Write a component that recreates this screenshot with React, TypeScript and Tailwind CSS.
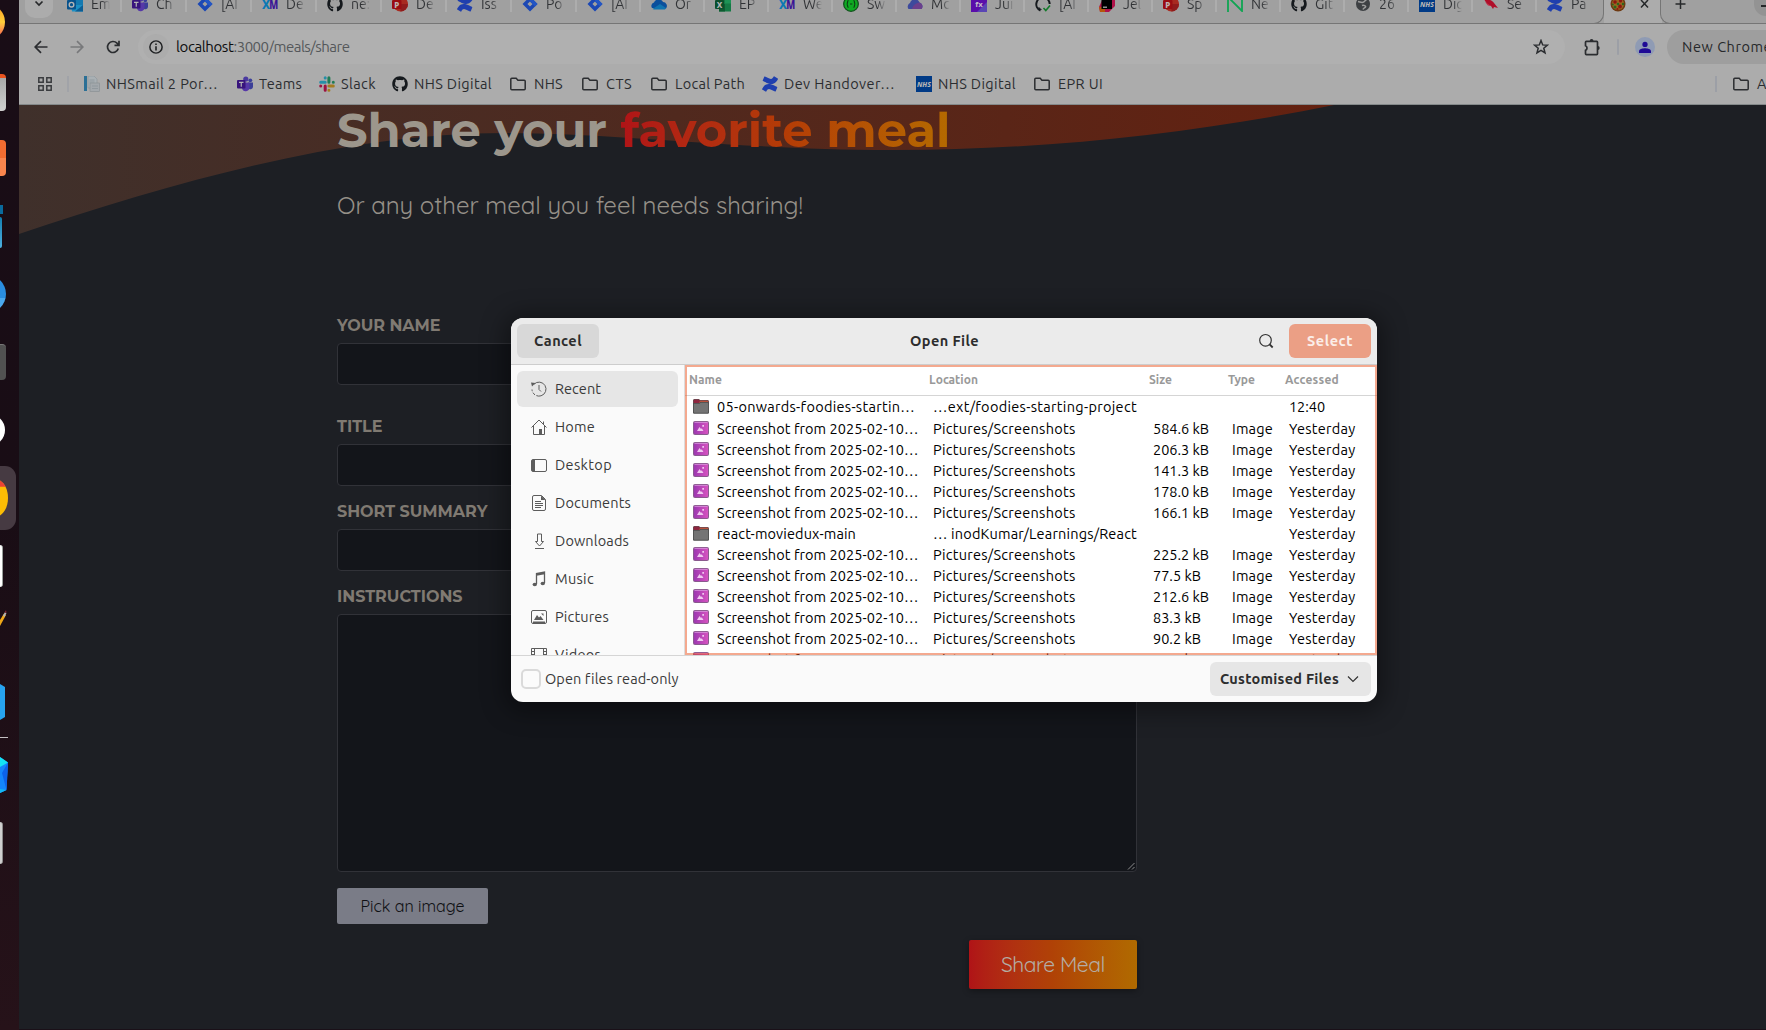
import { useLayoutEffect, useRef, type ReactNode } from "react";
import { FaGithub, FaConfluence } from "react-icons/fa";

const UI = "font-['Ubuntu','Noto_Sans',sans-serif]";
const HEAD = "font-['Montserrat','Inter',sans-serif]";
const BODY = "font-['Quicksand','Lato',sans-serif]";

/* Single line of text whose tracking is adjusted so that it fills `w` pixels. */
function Fit({ w, className = "", children }: { w: number; className?: string; children: string }) {
  const ref = useRef<HTMLSpanElement>(null);
  useLayoutEffect(() => {
    const el = ref.current;
    if (!el) return;
    el.style.letterSpacing = "0px";
    const natural = el.getBoundingClientRect().width;
    el.style.letterSpacing = `${(w - natural) / children.length}px`;
  }, [w, children]);
  return (
    <span ref={ref} className={`inline-block whitespace-pre ${className}`}>
      {children}
    </span>
  );
}

/* ---------- favicons ---------- */

const Svg = ({ children, s = 16, vb = 16, className = "" }: { children: ReactNode; s?: number; vb?: number; className?: string }) => (
  <svg width={s} height={s} viewBox={`0 0 ${vb} ${vb}`} fill="none" className={`shrink-0 ${className}`}>
    {children}
  </svg>
);

const letter = { fontFamily: "Noto Sans, sans-serif", fontWeight: 800, textAnchor: "middle" as const };

const Outlook = () => (
  <Svg>
    <rect x="5" y="0" width="11" height="14" fill="#1479b0" />
    <path d="M4 9h12v6.500H5z" fill="#1a8fc4" />
    <path d="M16 9v6.500H8z" fill="#0c5d94" />
    <rect x="0" y="4" width="9" height="9.500" rx="1" fill="#07528c" />
    <circle cx="4.500" cy="8.700" r="2.300" stroke="#b4b4b4" strokeWidth="1.400" />
  </Svg>
);
const Teams = () => (
  <Svg>
    <circle cx="13.300" cy="4.300" r="1.900" fill="#3a3f9a" />
    <circle cx="8.800" cy="3" r="2.600" fill="#4b3aa0" />
    <path d="M11 6.500h5v4.500a2.700 2.700 0 0 1-5 1z" fill="#3b3f98" />
    <path d="M5 6.500h7.500v5a3.800 3.800 0 0 1-7.500.8z" fill="#5638a8" />
    <rect x="0" y="4" width="8.500" height="8.500" rx="1" fill="#38147d" />
    <path d="M2 6.400h4.500M4.250 6.400v4.300" stroke="#b4b4b4" strokeWidth="1.200" />
  </Svg>
);
const Jira = () => (
  <Svg>
    <path fillRule="evenodd" d="M8 .5 15.500 8 8 15.500.500 8zM8 5.400 5.400 8 8 10.600 10.600 8z" fill="#1c48b4" />
    <path d="M8 .5 15.500 8l-2.500 2.500L8 5.400z" fill="#2456c4" />
  </Svg>
);
const XM = () => (
  <Svg>
    <text x="4" y="12.500" fontSize="12.500" fill="#0a78b4" textLength="8" lengthAdjust="spacingAndGlyphs" {...letter}>X</text>
    <text x="11.800" y="12.500" fontSize="12.500" fill="#3a1496" textLength="9" lengthAdjust="spacingAndGlyphs" {...letter}>M</text>
  </Svg>
);
const Github = () => <FaGithub size={16} color="#15191d" className="shrink-0" />;
const PPt = () => (
  <Svg>
    <circle cx="8.500" cy="8" r="7.500" fill="#a82a20" />
    <path d="M8.500 8H16a7.500 7.500 0 0 1-7.500 7.500z" fill="#8f1c1c" />
    <rect x="0" y="4" width="9.500" height="9" rx="1" fill="#9a0d12" />
    <text x="4.800" y="11.500" fontSize="8" fill="#c0b4b4" {...letter}>P</text>
  </Svg>
);
const Confluence = () => <FaConfluence size={16} color="#1f3fae" className="shrink-0" />;
const OneDrive = () => (
  <Svg>
    <path d="M1 12a3.600 3.600 0 0 1 2-5.500A5 5 0 0 1 12 6a4 4 0 0 1 3 6.500z" fill="#0a4f9c" />
    <path d="M1.500 13 9 8l6 4-1 1.500H3z" fill="#0f74b0" />
  </Svg>
);
const Excel = () => (
  <Svg>
    <rect x="4" y="0" width="12" height="15.500" fill="#157a45" />
    <path d="M10 0h6v7.500h-6z" fill="#1e9356" />
    <path d="M4 8h6v7.500H4z" fill="#0e5a31" />
    <rect x="0" y="4" width="9" height="9" rx="1" fill="#0b4f2c" />
    <text x="4.500" y="11.500" fontSize="8" fill="#b4b4b4" {...letter}>X</text>
  </Svg>
);
const Swagger = () => (
  <Svg>
    <circle cx="8" cy="8" r="7.300" fill="#0eaa22" stroke="#12511d" strokeWidth="1.300" />
    <path d="M5.500 4.500c-1.500 0-.5 3.500-1.800 3.500 1.300 0 .3 3.500 1.800 3.500M10.500 4.500c1.500 0 .5 3.500 1.800 3.500-1.300 0-.3 3.500-1.800 3.500M7 8h2.300" stroke="#0d3d15" strokeWidth="1.200" />
  </Svg>
);
const Cloud = () => (
  <Svg>
    <path d="M1.500 13a4 4 0 0 1 1.500-6A5 5 0 0 1 12.500 6.500 4 4 0 0 1 14.500 13z" fill="#3d4a9c" />
    <path d="M5 13c1-4 4-6 7.500-6.500A4 4 0 0 1 14.500 13z" fill="#6a3f8c" />
  </Svg>
);
const Fx = () => (
  <Svg>
    <rect width="16" height="16" fill="#5a0eaa" />
    <path d="M16 6v10H6z" fill="#5a45b4" />
    <text x="8" y="11" fontSize="7.500" fill="#c0b4c8" {...letter}>fx</text>
  </Svg>
);
const GithubCheck = () => (
  <Svg>
    <path d="M5.500 14.500A6.700 6.700 0 1 1 14.700 8" stroke="#15191d" strokeWidth="2" />
    <path d="M3.500 11.500c1.500.5 1 2 3 2" stroke="#15191d" strokeWidth="1.200" />
    <path d="m8.500 12 2.300 2.500L15 9.500" stroke="#137a2a" strokeWidth="1.600" />
  </Svg>
);
const JetBrains = () => (
  <Svg>
    <path d="M5 0h7l4 4v6l-6 6H1l-1-5z" fill="#b0124a" />
    <path d="M0 11h6v5H1z" fill="#b4560c" />
    <rect x="2.500" y="2.500" width="10.500" height="10.500" fill="#000" />
    <path d="M4 11.200h4" stroke="#b4b4b4" strokeWidth="1.200" />
  </Svg>
);
const NLogo = () => (
  <Svg>
    <path d="M1 16V1l14 14V0" stroke="#0fa552" strokeWidth="1.800" />
  </Svg>
);
const Globe = () => (
  <Svg>
    <circle cx="8" cy="8" r="7" fill="#3d4043" />
    <path d="M3 5.500c2 .3 3 1.200 5 .8s1.500-2 3.500-2.300M7 9.500c2-.8 4 .5 3.500 1.500S8.500 12 8 13.500" stroke="#9c9c9c" strokeWidth="1.500" />
  </Svg>
);
const Nhs = () => (
  <Svg>
    <rect width="16" height="16" fill="#003a86" />
    <text x="8" y="11" fontSize="7.500" fontStyle="italic" fill="#b4b4b4" textLength="14" lengthAdjust="spacingAndGlyphs" {...letter}>NHS</text>
  </Svg>
);
const Bird = () => (
  <Svg>
    <path d="M1 3c4 0 8 1 10 4l4 5-4-1-1 2-2-3C5 9 3 7 1 3z" fill="#b00f2a" />
    <path d="m2 6 6 4-3-.5z" fill="#c4304a" />
  </Svg>
);
const Pizza = () => (
  <Svg>
    <circle cx="8" cy="8" r="7.500" fill="#6e3a12" />
    <circle cx="8" cy="8" r="6" fill="#9a6420" />
    <circle cx="5" cy="6" r="1.800" fill="#8c1610" />
    <circle cx="10.500" cy="5" r="1.600" fill="#8c1610" />
    <circle cx="10" cy="10.500" r="1.900" fill="#8c1610" />
    <circle cx="5" cy="11" r="1.500" fill="#2c661c" />
    <circle cx="8" cy="8" r="1.300" fill="#2c661c" />
    <circle cx="13" cy="8" r="1.200" fill="#2c661c" />
    <circle cx="7.500" cy="13" r="1.100" fill="#8c1610" />
    <circle cx="2.800" cy="8.500" r="1" fill="#2c661c" />
  </Svg>
);
const SlackLogo = () => (
  <Svg>
    <g strokeWidth="3" strokeLinecap="round">
      <path d="M6.200 1.700v.3M1.700 6.200h4.500" stroke="#258fa8" />
      <path d="M9.900 1.700v4.500M14.300 6.200h.01" stroke="#1f7c55" />
      <path d="M9.900 9.900h4.400M9.900 14.200h.01" stroke="#a57c20" />
      <path d="M6.200 9.900v4.400M1.700 9.900h.01" stroke="#9c1240" />
    </g>
  </Svg>
);
const Doc = () => (
  <Svg>
    <rect x="0" y="0" width="3" height="15" fill="#2c7096" />
    <path d="M4 0h6l3 3v9H4z" fill="#a9b0b4" stroke="#8b9499" strokeWidth=".6" />
    <rect x="6" y="7" width="9.500" height="8.500" fill="#a3a8ac" stroke="#858c90" strokeWidth=".6" />
    <path d="M5.500 4h5M5.500 6h5M8 10h6M8 12.500h6" stroke="#8b9499" strokeWidth=".8" />
  </Svg>
);
const Folder = () => (
  <Svg>
    <path d="M.8 3.300c0-.6.400-1 1-1h4.400l1.700 1.900h6.300c.6 0 1 .4 1 1v7.500c0 .6-.4 1-1 1H1.800c-.6 0-1-.4-1-1z" stroke="#2b2d30" strokeWidth="1.500" />
  </Svg>
);

/* ---------- browser chrome ---------- */

const tabs: [() => ReactNode, string][] = [
  [Outlook, "Em"], [Teams, "Ch"], [Jira, "[AI"], [XM, "De"], [Github, "ne:"], [PPt, "De"], [Confluence, "Iss"], [Jira, "Po"],
  [Jira, "[AI"], [OneDrive, "Or"], [Excel, "EP"], [XM, "We"], [Swagger, "Sw"], [Cloud, "Mc"], [Fx, "Jui"], [GithubCheck, "[AI"],
  [JetBrains, "Jel"], [PPt, "Sp"], [NLogo, "Ne"], [Github, "Git"], [Globe, "26"], [Nhs, "Dig"], [Bird, "Se"], [Confluence, "Pa"],
];

function TabStrip() {
  return (
    <div className="relative flex h-[24px] shrink-0 overflow-hidden border-b border-[#757575] bg-[#a0a0a0]">
      <div className="ml-[6px] flex h-[18px] w-[28px] shrink-0 items-start justify-center rounded-b-[10px] bg-[#acacac]">
        <svg width="10" height="8" viewBox="0 0 10 8" fill="none"><path d="m1.500 1.500 3.500 3.500 3.500-3.500" stroke="#26282a" strokeWidth="1.700" /></svg>
      </div>
      <div className="ml-[4px] flex shrink-0">
        {tabs.map(([Icon, t], i) => (
          <div key={i} className={`flex h-[12px] shrink-0 items-center ${i < 8 ? "w-[65px]" : "w-[64px]"} ${i < 23 ? "border-r-2 border-[#adadad]" : ""}`}>
            <div className="-mt-[4px] ml-[10px] flex w-[24px] shrink-0"><Icon /></div>
            <span className="-mt-[5px] w-[19px] overflow-hidden bg-gradient-to-r from-[#303235] from-55% to-[#a0a0a0] bg-clip-text text-[14px] leading-[20px] whitespace-nowrap text-transparent">{t}</span>
          </div>
        ))}
      </div>
      <div className="absolute top-0 left-[1585px] flex h-[24px] w-[58px] items-start bg-[#acacac]">
        <div className="-ml-[10px] h-[24px] w-[10px] shrink-0 rounded-br-[10px] border-r border-b border-[#757575] bg-[#a0a0a0]" />
        <div className="-mt-[4px] ml-[6px]"><Pizza /></div>
        <svg className="ml-[14px]" width="9" height="9" viewBox="0 0 9 9"><path d="m1 0 7 7.500M8 0 1 7.500" stroke="#26282a" strokeWidth="1.500" /></svg>
      </div>
      <div className="absolute top-0 left-[1641px] flex h-[24px] w-[106px] items-start rounded-bl-[10px] border-b border-l border-[#757575] bg-[#a0a0a0]">
        <svg className="mt-[-1px] ml-[14px] shrink-0" width="11" height="11" viewBox="0 0 11 11"><path d="M5.500 0v10M.5 5h10" stroke="#26282a" strokeWidth="1.500" /></svg>
        <div className="ml-[68px] flex h-[16px] w-[24px] shrink-0 items-start rounded-b-full bg-[#939393]"><span className="mt-[5px] ml-[7px] h-[2px] w-[9px] bg-[#26282a]" /></div>
      </div>
    </div>
  );
}

function Toolbar() {
  return (
    <div className="flex h-[46px] shrink-0 items-center">
      <div className="flex w-[119px] shrink-0 items-center pl-[15px]">
        <svg width="14" height="14" viewBox="0 0 14 14" fill="none"><path d="M13.500 7H1.500M7 1.200 1.200 7 7 12.800" stroke="#2b2d30" strokeWidth="1.700" /></svg>
        <svg className="ml-[22px]" width="14" height="14" viewBox="0 0 14 14" fill="none"><path d="M.5 7h12M7 1.200 12.800 7 7 12.800" stroke="#78797b" strokeWidth="1.700" /></svg>
        <svg className="ml-[22px]" width="14" height="14" viewBox="0 0 14 14" fill="none"><path d="M12.300 8.500A5.500 5.500 0 1 1 11 3.200l1.700 1.700M13 .8v4.500H8.500" stroke="#2b2d30" strokeWidth="1.700" /></svg>
      </div>
      <div className="flex h-[34px] w-[1427px] shrink-0 items-center rounded-full bg-[#b0b0b0]">
        <div className="ml-[5px] flex size-[26px] items-center justify-center rounded-full bg-[#acacac]">
          <Svg s={14}><circle cx="8" cy="8" r="7" stroke="#1f2123" strokeWidth="1.700" /><path d="M8 7v5M8 4v1.700" stroke="#1f2123" strokeWidth="1.800" /></Svg>
        </div>
        <div className="ml-[7px] flex text-[15px] leading-5">
          <Fit w={57.5} className="text-[#0c0d0e]">localhost</Fit>
          <Fit w={116} className="text-[#55585b]">:3000/meals/share</Fit>
        </div>
        <svg className="mr-[16px] ml-auto" width="16" height="16" viewBox="0 0 16 16" fill="none"><path d="m8 1.500 1.700 4.400 4.700.3-3.600 3 1.200 4.600L8 11.300l-4 2.500 1.200-4.600-3.600-3 4.700-.3z" stroke="#2b2d30" strokeWidth="1.500" /></svg>
      </div>
      <svg className="ml-[19px] shrink-0" width="17" height="18" viewBox="0 0 17 18" fill="none">
        <path d="M1.500 4.200c0-.5.300-.8.800-.8h10.400c.5 0 .8.300.8.800v11.600c0 .5-.3.800-.8.800H2.300c-.5 0-.8-.3-.8-.8v-3.400a2.500 2.500 0 0 0 0-4.600z" stroke="#2b2d30" strokeWidth="1.700" />
        <path d="M5.700 3a1.900 1.900 0 0 1 3.800 0zM13.800 8.100a1.900 1.900 0 0 1 0 3.800z" fill="#2b2d30" />
      </svg>
      <div className="ml-[16px] h-[16px] w-[2px] shrink-0 rounded bg-[#9c9fa6]" />
      <div className="ml-[16px] flex size-[20px] shrink-0 items-center justify-center overflow-hidden rounded-full bg-[#8f9bb4]">
        <Svg s={12} className="-mt-px"><circle cx="8" cy="4.500" r="3.500" fill="#1f0a96" /><path d="M0 16v-2.500C0 10.500 5 9.500 8 9.500s8 1 8 4V16z" fill="#1f0a96" /></Svg>
      </div>
      <div className="ml-[12px] flex h-[34px] w-[120px] shrink-0 items-center rounded-l-full bg-[#9e9e9e] pl-[15px] text-[14.5px] text-[#26282a]">
        <Fit w={134}>New Chrome availa</Fit>
      </div>
    </div>
  );
}

const bookmarks: [() => ReactNode, string, number, string][] = [
  [Doc, "NHSmail 2 Por…", 112, "w-[153px] gap-[6px]"],
  [Teams, "Teams", 43, "w-[82px] gap-[6px]"],
  [SlackLogo, "Slack", 35, "w-[73px] gap-[6px]"],
  [Github, "NHS Digital", 78, "w-[118px] gap-[6px]"],
  [Folder, "NHS", 29, "w-[72px] gap-[8px]"],
  [Folder, "CTS", 26, "w-[69px] gap-[8px]"],
  [Folder, "Local Path", 70, "w-[111px] gap-[8px]"],
  [Confluence, "Dev Handover…", 111, "w-[154px] gap-[6px]"],
  [Nhs, "NHS Digital", 78, "w-[118px] gap-[6px]"],
  [Folder, "EPR UI", 45, "w-[74px] gap-[8px]"],
];

function Bookmarks() {
  return (
    <div className="flex h-[35px] shrink-0 items-start border-b border-[#84898a] pb-[6px] text-[14.5px] leading-[28px] text-[#2b2d30]">
      <div className="flex h-[28px] shrink-0 items-center">
        <svg className="ml-[19px]" width="14" height="14" viewBox="0 0 14 14" fill="none">
          <path d="M.8.800h4.400v4.400H.8zM8.800.800h4.400v4.400H8.800zM.8 8.800h4.400v4.400H.8zM8.800 8.800h4.400v4.400H8.800z" stroke="#3a3c3f" strokeWidth="1.500" />
        </svg>
        <div className="mr-[15px] ml-[15px] h-[16px] w-[2px] bg-[#a1a3a8]" />
        {bookmarks.map(([Icon, t, w, cls], i) => (
          <div key={i} className={`flex shrink-0 items-center ${cls}`}>
            <Icon />
            <Fit w={w}>{t}</Fit>
          </div>
        ))}
      </div>
      <div className="ml-auto flex h-[28px] w-[51px] shrink-0 items-center overflow-hidden">
        <div className="mr-[16px] h-[16px] w-[2px] shrink-0 bg-[#9c9fa6]" />
        <Folder />
        <span className="ml-[8px] whitespace-nowrap">All Bookmarks</span>
      </div>
    </div>
  );
}

/* ---------- dock ---------- */

const Slot = ({ children, active = false }: { children: ReactNode; active?: boolean }) => (
  <div className="flex h-[68px] shrink-0 items-center">
    <div className={`flex h-[64px] items-center ${active ? "w-[16px] rounded-r-[11px] bg-[#463a42]" : "w-[19px]"}`}>{children}</div>
  </div>
);

function Dock() {
  return (
    <div className="flex h-[1030px] w-[19px] shrink-0 flex-col overflow-hidden bg-gradient-to-b from-[#190d16] via-[#190d15] to-[#261219]">
      <div className="-mt-[12px] flex flex-col">
        <Slot><div className="-ml-[31px] size-[36px] shrink-0 rounded-full bg-gradient-to-b from-[#ff9a1f] via-[#ffcf3a] to-[#f0364f]" /></Slot>
        <Slot><div className="mt-[4px] h-[37px] w-[6px] rounded-r-[4px] border-t-4 border-[#e95420] bg-gradient-to-b from-[#a8a8a8] to-[#d0d0d0]" /></Slot>
        <Slot><div className="h-[36px] w-[6px] rounded-r-[4px] bg-gradient-to-b from-[#f26d31] from-50% to-[#f9854d] to-50%" /></Slot>
        <Slot>
          <div className="flex flex-col gap-[3px]">
            <div className="h-[9px] w-[3px] bg-[#0a6a9c]" />
            <div className="h-[31px] w-[2px] rounded-r-[2px] bg-gradient-to-b from-[#0f7eb0] to-[#4cb0e0]" />
          </div>
        </Slot>
        <Slot><div className="-ml-[32px] size-[38px] shrink-0 rounded-full bg-gradient-to-b from-[#2a8de0] from-60% to-[#4aa8ee] to-60%" /></Slot>
        <Slot><div className="h-[36px] w-[6px] rounded-r-[4px] border-t border-[#777] bg-[#515151]" /></Slot>
        <Slot><div className="-ml-[27px] size-[32px] shrink-0 rounded-full bg-white" /></Slot>
        <Slot active>
          <svg width="8" height="38" viewBox="0 0 8 38"><path d="M0 1.500C5 5 8 11 8 19S5 33 0 36.500z" fill="#fbbc05" /><path d="M0 1.500C2.500 3 4.500 5.500 5.800 7.800H0z" fill="#ea4335" /></svg>
        </Slot>
        <Slot><div className="h-[42px] w-[3px] rounded-r-[3px] border-r border-[#9aa09c] bg-white" /></Slot>
        <Slot>
          <svg className="-mt-[30px]" width="7" height="18" viewBox="0 0 7 18"><path d="M0 10 4 3.500 6 5 0 16z" fill="#f0a818" /><path d="M3 5.500 5 2l1.500 1L4.500 7z" fill="#b4b4b4" /><path d="M4.500 2.500 5.500.500l1 .5-.5 2z" fill="#7c2430" /></svg>
        </Slot>
        <Slot><svg width="5" height="36" viewBox="0 0 5 36"><path d="M0 0 5 3v30l-5 3z" fill="#27a3ef" /></svg></Slot>
      </div>
      <div className="mt-[1px] mb-[3px] h-px w-[8px] shrink-0 bg-[#c4c0c2]" />
      <Slot>
        <svg width="8" height="36" viewBox="0 0 8 36"><path d="M0 0 8 5.500 6.500 33 0 36z" fill="#1486fb" /><path d="M0 0 8 5.500 0 10z" fill="#14e4f4" /><path d="m0 32 6.500 1L0 36z" fill="#12b8f4" /><path d="M8 5.500 2 16l4.500 17z" fill="#0c62ea" /></svg>
      </Slot>
      <Slot><div className="h-[42px] w-[3px] rounded-r-[3px] border-r border-[#8a8a8a] bg-[#cfcfcf]" /></Slot>
    </div>
  );
}

/* ---------- page ---------- */

const Label = ({ w, children }: { w: number; children: string }) => (
  <div className={`h-[28px] pt-px text-[16px] leading-[20px] font-bold text-[#807a72] ${HEAD}`}><Fit w={w}>{children}</Fit></div>
);

const Field = ({ label, w, className = "" }: { label: string; w: number; className?: string }) => (
  <div className={`flex flex-col ${className}`}>
    <Label w={w}>{label}</Label>
    <div className="h-[42px] rounded-[4px] border border-[#313238] bg-[#13151a]" />
  </div>
);

function MealPage() {
  return (
    <div className="relative flex-1 overflow-hidden border-b border-[#1a1018] bg-[#1d1f24]">
      <svg className="absolute top-0 left-0" width="1320" height="135" viewBox="19 105 1320 135">
        <defs>
          <linearGradient id="wave" x1="0" x2="1">
            <stop offset="0" stopColor="#3f302b" />
            <stop offset=".5" stopColor="#50291e" />
            <stop offset="1" stopColor="#642110" />
          </linearGradient>
        </defs>
        <path d="M19 105V234C180 180 350 133 504 133C620 133 740 150 893 150C1050 150 1200 132 1334 105Z" fill="url(#wave)" />
      </svg>
      <div className="relative ml-[318px] flex w-[800px] flex-col">
        <h1 className={`flex h-[64px] items-start pt-px text-[48px] leading-[48px] font-bold text-[#9c968c] ${HEAD}`}>
          <Fit w={283.5}>Share your </Fit>
          <Fit w={330} className="bg-gradient-to-r from-[#b01317] via-[#b43c06] to-[#b46a00] bg-clip-text text-transparent">favorite meal</Fit>
        </h1>
        <p className={`mt-[19px] text-[24px] leading-[34px] text-[#959088] ${BODY}`}>
          <Fit w={466}>Or any other meal you feel needs sharing!</Fit>
        </p>
        <Field className="mt-[93px]" label="YOUR NAME" w={103.5} />
        <Field className="mt-[31px]" label="TITLE" w={45.5} />
        <Field className="mt-[15px]" label="SHORT SUMMARY" w={150.5} />
        <div className="mt-[15px] flex flex-col">
          <Label w={125.5}>INSTRUCTIONS</Label>
          <div className="flex h-[258px] items-end justify-end rounded-[4px] border border-[#313238] bg-[#13151a] p-px">
            <svg width="8" height="8" viewBox="0 0 8 8"><path d="M1 7.500 7.500 1M5 7.500 7.500 5" stroke="#8c8c8c" strokeWidth="1" /></svg>
          </div>
        </div>
        <div className={`mt-[16px] flex h-[36px] w-[151px] items-center justify-center rounded-[2px] bg-[#7a7c87] text-[16px] text-[#0f1013] ${BODY}`}>
          <Fit w={104}>Pick an image</Fit>
        </div>
        <div className={`mt-[16px] flex h-[49px] w-[168px] items-center justify-center self-end rounded-[2px] bg-gradient-to-r from-[#b01317] via-[#b04206] to-[#b06a00] text-[21px] text-[#b4aca4] shadow-[0_2px_6px_rgba(0,0,0,0.35)] ${BODY}`}>
          <Fit w={104}>Share Meal</Fit>
        </div>
      </div>
    </div>
  );
}

/* ---------- file dialog ---------- */

const G = "#5c5c5c";
const places: [string, number, ReactNode][] = [
  ["Recent", 46, <><path d="M3 3.200A7 7 0 1 1 1 8.500" stroke={G} strokeDasharray="30 1.500 3 1.500" /><path d="M8 4v4.500l2 2" stroke={G} /><path d="M0 1.500 4.500 2 1 5.500z" fill={G} /></>],
  ["Home", 40, <><path d="M.5 8.500 8 1l7.500 7.500M2.500 7v8.500h11V7M12.500 2.500v3" stroke={G} /><path d="M8 10h3v5.500H8z" fill={G} /></>],
  ["Desktop", 57, <><rect x=".5" y="2.500" width="15" height="12" rx="1.500" stroke={G} /><path d="M1 3h3v11H1z" fill={G} /></>],
  ["Documents", 76, <><path d="M3 .5h7.500l4 4v9.500a1.500 1.500 0 0 1-1.500 1.500H3A1.500 1.500 0 0 1 1.500 14V2A1.500 1.500 0 0 1 3 .5zM4 6.500h6M4 8.500h8M4 10.500h8M4 12.500h6" stroke={G} /><path d="M10 .5v4.500h4.500z" fill={G} /></>],
  ["Downloads", 74, <path d="M6.500 1h4v7.500h2L8.500 13l-4-4.500h2zM4 15.500h9" stroke={G} />],
  ["Music", 39, <><path d="M5.500 13V2.500l8-1.500v11M5.500 4l8-1.500" stroke={G} strokeWidth="1.300" /><ellipse cx="3.800" cy="13.500" rx="2.200" ry="1.800" fill={G} /><ellipse cx="11.800" cy="12.500" rx="2.200" ry="1.800" fill={G} /></>],
  ["Pictures", 54, <><rect x=".5" y="1.500" width="15" height="13" rx="1.500" stroke={G} /><path d="M2 12.500h12v2H2zM3 11l3-5 2 2.500 1.500-1.500 3 4zM10 4.500h2.500V7z" fill={G} /></>],
  ["Videos", 46, <path d="M.5 1.500h15v13H.5zM3.500 1.500v13M12.500 1.500v13M.5 4.500h3M.5 7.500h3M12.500 4.500h3M12.500 7.500h3" stroke={G} />],
];

const files: [string, number, string, number, string, number, string][] = [
  ["05-onwards-foodies-startin…", 198, "…ext/foodies-starting-project", 204, "", 0, "12:40"],
  ["", 0, "", 0, "584.6 kB", 56, ""],
  ["", 0, "", 0, "206.3 kB", 56, ""],
  ["", 0, "", 0, "141.3 kB", 56, ""],
  ["", 0, "", 0, "178.0 kB", 56, ""],
  ["", 0, "", 0, "166.1 kB", 56, ""],
  ["react-moviedux-main", 139, "… inodKumar/Learnings/React", 204, "", 0, "Yesterday"],
  ["", 0, "", 0, "225.2 kB", 56, ""],
  ["", 0, "", 0, "77.5 kB", 48, ""],
  ["", 0, "", 0, "212.6 kB", 56, ""],
  ["", 0, "", 0, "83.3 kB", 48, ""],
  ["", 0, "", 0, "90.2 kB", 48, ""],
  ["", 0, "", 0, "90.2 kB", 48, ""],
];

const FolderIcon = () => (
  <svg width="16" height="15" viewBox="0 0 16 15" className="-mt-px shrink-0">
    <path d="M1.500 0H6l1 1h7.500c.9 0 1.500.6 1.500 1.500V7H0V1.500C0 .6.600 0 1.500 0z" fill="#6a4a50" />
    <path d="M1.500.800h4.300L7 2v2H.8V1.500c0-.4.300-.7.700-.7z" fill="#8e2640" />
    <path d="M7 1.700h7.500c.4 0 .7.300.7.700V4H6z" fill="#b8523c" />
    <path d="M0 4h6.200l1.200-1H14.500c.9 0 1.500.6 1.500 1.500v8.700c0 .9-.6 1.600-1.500 1.600h-13C.6 14.800 0 14.100 0 13.200z" fill="#4c4c4c" />
    <path d="M.8 4.800h5.700l1.200-1h6.800c.4 0 .7.300.7.700v8.500c0 .5-.3.800-.7.800h-13c-.4 0-.7-.3-.7-.8z" fill="#747474" />
  </svg>
);
const ImageIcon = () => (
  <svg width="16" height="14" viewBox="0 0 16 14" className="-mt-px shrink-0">
    <defs><linearGradient id="pic" x1="0" x2="1"><stop offset="0" stopColor="#9c38b0" /><stop offset="1" stopColor="#d653c0" /></linearGradient></defs>
    <rect width="16" height="14" rx="2" fill="#8a5a8e" />
    <rect x="1" y="1" width="14" height="12" rx="1" fill="url(#pic)" />
    <path d="M1.500 1.400h13" stroke="#dc9ae0" strokeWidth=".8" />
    <path d="M4 10 6.500 6l1.500 2 .8-.8L10.500 10zM9.300 4h1.700v1.700H9.300z" fill="#f0c8f0" />
  </svg>
);

const COLS = "grid grid-cols-[240px_220px_79px_57px_1fr]";
const headers: [string, number][] = [["Name", 33], ["Location", 49], ["Size", 23], ["Type", 27], ["Accessed", 54]];

function OpenFileDialog() {
  return (
    <div className={`absolute top-[318px] left-[511px] flex h-[384px] w-[866px] flex-col overflow-hidden rounded-[12px] bg-[#fafafa] text-[14.5px] text-[#3a3a3a] shadow-[0_3px_24px_6px_rgba(0,0,0,0.4)] ${UI}`}>
      <div className="flex h-[47px] shrink-0 items-start border-b border-[#cdcdcd] bg-[#ebebeb] p-[6px] leading-[34px] font-bold">
        <div className="flex h-[34px] w-[82px] justify-center rounded-[6px] bg-[#d8d8d8] text-[#2d2d2d]"><Fit w={48}>Cancel</Fit></div>
        <div className="ml-[311px] w-[70px] text-[#2d2d2d]"><Fit w={69}>Open File</Fit></div>
        <svg className="mt-[9px] ml-[278px]" width="16" height="16" viewBox="0 0 16 16" fill="none"><circle cx="7.500" cy="7.300" r="5.800" stroke="#333" strokeWidth="1.200" /><path d="m11.700 11.500 3 3" stroke="#333" strokeWidth="1.800" /></svg>
        <div className="ml-auto flex h-[34px] w-[82px] justify-center rounded-[6px] bg-[#eb9f85] text-[#fbeee9]"><Fit w={46}>Select</Fit></div>
      </div>
      <div className="flex h-[290px] shrink-0">
        <div className="flex w-[174px] shrink-0 flex-col gap-[2px] overflow-hidden border-r border-[#dcdcdc] px-[6px] pt-[6px]">
          {places.map(([t, w, icon], i) => (
            <div key={t} className={`flex h-[36px] w-[161px] shrink-0 items-center rounded-[6px] pl-[14px] ${i === 0 ? "bg-[#e6e6e6]" : ""}`}>
              <Svg>{icon}</Svg>
              <Fit w={w} className="ml-[8px]">{t}</Fit>
            </div>
          ))}
        </div>
        <div className="relative flex-1 overflow-hidden bg-white">
          <div className={`${COLS} h-[31px] border-b border-[#d5d5d5] pl-[2px] text-[12px] leading-[30px] font-bold text-[#999]`}>
            {headers.map(([t, w]) => (
              <div key={t} className="pl-[2px]"><Fit w={w}>{t}</Fit></div>
            ))}
          </div>
          {files.map(([name, nw, loc, lw, size, sw, acc], i) => (
            <div key={i} className={`${COLS} ${i === 0 ? "h-[22px] leading-[22px]" : "h-[21px] leading-[21px]"} pl-[2px] text-black`}>
              <div className="flex items-center gap-[8px] pl-[6px]">
                {name ? <FolderIcon /> : <ImageIcon />}
                <Fit w={nw || 201.5}>{name || "Screenshot from 2025-02-10…"}</Fit>
              </div>
              <div className="pl-[6px]"><Fit w={lw || 142.5}>{loc || "Pictures/Screenshots"}</Fit></div>
              <div className="pl-[6px]">{size && <Fit w={sw}>{size}</Fit>}</div>
              <div className="pl-[6px]">{size && <Fit w={41}>Image</Fit>}</div>
              <div className="pl-[6px]"><Fit w={acc === "12:40" ? 36 : 66.5}>{acc || "Yesterday"}</Fit></div>
            </div>
          ))}
          <div className="pointer-events-none absolute inset-0 border-2 border-[#e95420]/50" />
        </div>
      </div>
      <div className="flex h-[47px] shrink-0 items-center border-t border-[#d5d5d5] px-[6px]">
        <div className="ml-[4px] size-[20px] rounded-[5px] border-2 border-[#dadada] bg-[#fbfbfb]" />
        <Fit w={133} className="ml-[4px]">Open files read-only</Fit>
        <div className="ml-auto flex h-[34px] w-[161px] items-center rounded-[6px] bg-[#e6e6e6] pl-[10px] font-bold text-[#2d2d2d]">
          <Fit w={119}>Customised Files</Fit>
          <svg className="ml-[8px]" width="12" height="8" viewBox="0 0 12 8" fill="none"><path d="m1 1.500 5 5 5-5" stroke="#333" strokeWidth="1.200" /></svg>
        </div>
      </div>
    </div>
  );
}

export default function App() {
  return (
    <div className="relative flex h-[1030px] w-[1766px] overflow-hidden bg-[#1d1f24]">
      <Dock />
      <div className="flex w-[1747px] flex-col">
        <div className={`flex shrink-0 flex-col bg-[#acacac] ${UI}`}>
          <TabStrip />
          <Toolbar />
          <Bookmarks />
        </div>
        <MealPage />
      </div>
      <OpenFileDialog />
    </div>
  );
}
